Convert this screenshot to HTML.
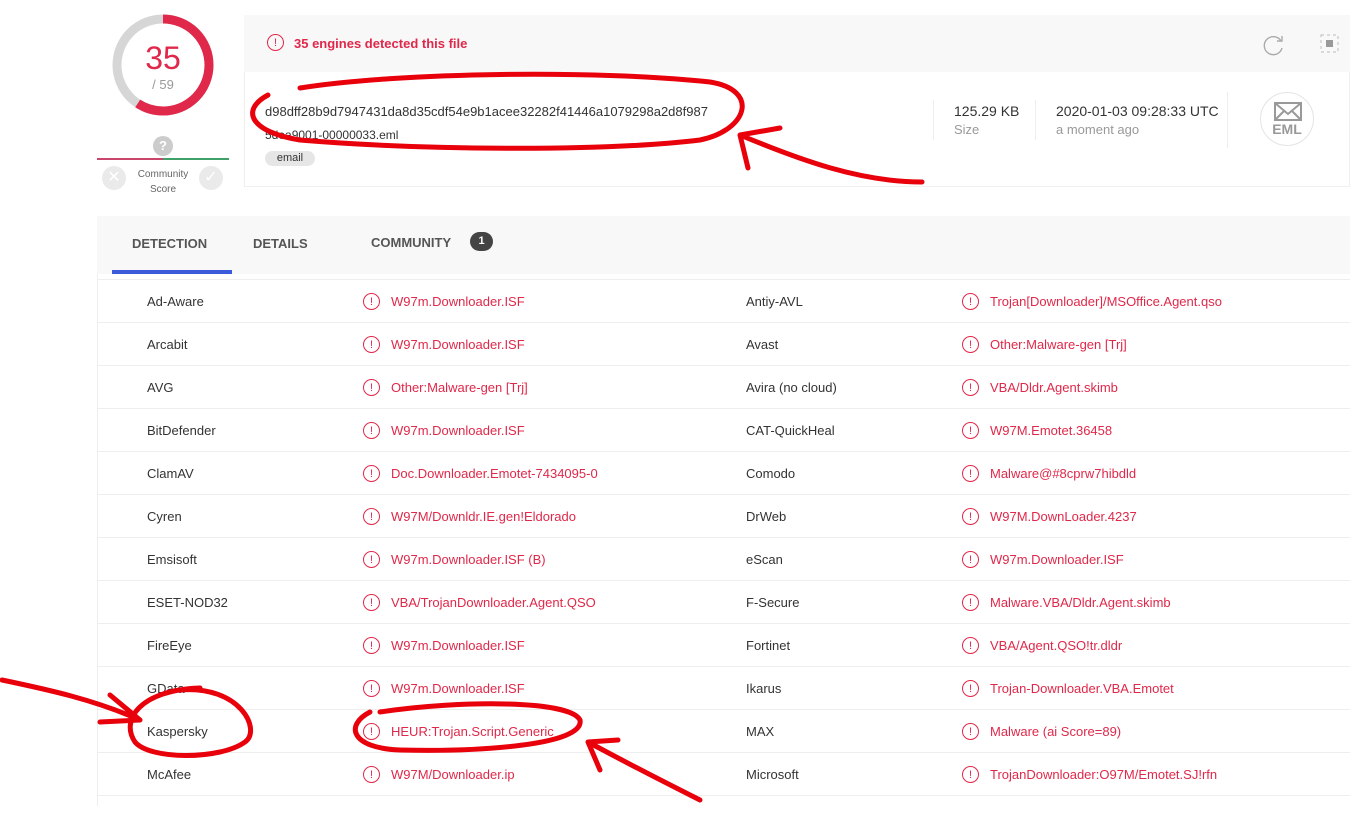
<!DOCTYPE html>
<html><head><meta charset="utf-8"><style>
body{margin:0;width:1350px;height:806px;background:#fff;font-family:"Liberation Sans",sans-serif;position:relative;overflow:hidden;color:#333}
.a{position:absolute}
.row{position:absolute;left:97px;width:1253px;height:43px;border-top:1px solid #eee;font-size:13px}
.row span{position:absolute;top:14px}
.red{color:#e0284a}
.ic{position:absolute;top:13px;width:17px;height:17px;border:1.3px solid #e0284a;border-radius:50%;box-sizing:border-box;color:#e0284a;font-size:11px;display:flex;align-items:center;justify-content:center;font-weight:normal}
</style></head><body>
<svg class="a" style="left:108px;top:10px" width="110" height="110">
<circle cx="55" cy="55" r="46" fill="none" stroke="#d6d6d6" stroke-width="9"/>
<circle cx="55" cy="55" r="46" fill="none" stroke="#e0284a" stroke-width="9" stroke-dasharray="171 289" transform="rotate(-90 55 55)"/>
<circle cx="55" cy="55" r="40" fill="#fff"/>
</svg>
<div class="a red" style="left:123px;top:40px;width:80px;text-align:center;font-size:32px">35</div>
<div class="a" style="left:123px;top:77px;width:80px;text-align:center;font-size:13px;color:#999">/ 59</div>
<div class="a" style="left:97px;top:158px;width:66px;height:2px;background:#c9456c"></div>
<div class="a" style="left:163px;top:158px;width:66px;height:2px;background:#3fa06a"></div>
<div class="a" style="left:153px;top:136px;width:20px;height:20px;border-radius:50%;background:#ccc;color:#fff;font-size:13px;text-align:center;line-height:20px;font-weight:bold">?</div>
<div class="a" style="left:102px;top:166px;width:24px;height:24px;border-radius:50%;background:#eaeaea;color:#fff;text-align:center;line-height:24px">✕</div>
<div class="a" style="left:199px;top:166px;width:24px;height:24px;border-radius:50%;background:#eaeaea;color:#fff;text-align:center;line-height:24px">✓</div>
<div class="a" style="left:128px;top:167px;width:70px;text-align:center;font-size:10px;color:#666;line-height:15px">Community<br>Score</div>
<div class="a" style="left:244px;top:15px;width:1106px;height:172px;border:1px solid #f0f0f0;box-sizing:border-box"></div>
<div class="a" style="left:244px;top:15px;width:1106px;height:57px;background:#f8f8f8"></div>
<div class="ic" style="left:267px;top:34px">!</div>
<div class="a red" style="left:294px;top:36px;font-size:13px;font-weight:bold">35 engines detected this file</div>
<svg class="a" style="left:1262px;top:33px" width="24" height="24"><path d="M19 8 A9 9 0 1 0 20 15" fill="none" stroke="#aaa" stroke-width="1.4"/><path d="M15 8 L20 8 L20 3" fill="none" stroke="#aaa" stroke-width="1.4"/></svg>
<svg class="a" style="left:1320px;top:34px" width="20" height="20"><rect x="1" y="1" width="17" height="17" fill="none" stroke="#bbb" stroke-dasharray="3 3"/><rect x="6" y="6" width="7" height="7" fill="#999"/></svg>
<div class="a" style="left:265px;top:104px;font-size:13px;color:#333">d98dff28b9d7947431da8d35cdf54e9b1acee32282f41446a1079298a2d8f987</div>
<div class="a" style="left:265px;top:128px;font-size:12px;color:#333">5dea9001-00000033.eml</div>
<div class="a" style="left:265px;top:151px;width:50px;height:15px;border-radius:8px;background:#e6e6e6;font-size:11px;text-align:center;line-height:15px">email</div>
<div class="a" style="left:933px;top:100px;width:1px;height:40px;background:#eee"></div>
<div class="a" style="left:1035px;top:100px;width:1px;height:40px;background:#eee"></div>
<div class="a" style="left:1227px;top:92px;width:1px;height:56px;background:#eee"></div>
<div class="a" style="left:954px;top:103px;font-size:14px">125.29 KB</div>
<div class="a" style="left:954px;top:122px;font-size:13px;color:#999">Size</div>
<div class="a" style="left:1056px;top:103px;font-size:14px">2020-01-03 09:28:33 UTC</div>
<div class="a" style="left:1056px;top:122px;font-size:13px;color:#999">a moment ago</div>
<div class="a" style="left:1260px;top:92px;width:54px;height:54px;border:1px solid #e4e4e4;border-radius:50%;box-sizing:border-box"></div>
<svg class="a" style="left:1274px;top:102px" width="28" height="20"><rect x="1" y="1" width="26" height="17" fill="none" stroke="#999" stroke-width="2"/><path d="M1 1 L14 12 L27 1 M1 18 L10 9 M27 18 L18 9" fill="none" stroke="#999" stroke-width="2"/></svg>
<div class="a" style="left:1260px;top:121px;width:54px;text-align:center;font-size:14px;font-weight:bold;color:#999">EML</div>
<div class="a" style="left:97px;top:216px;width:1253px;height:58px;background:#f8f8f8"></div>
<div class="a" style="left:132px;top:236px;font-size:13px;font-weight:bold;color:#555">DETECTION</div>
<div class="a" style="left:253px;top:236px;font-size:13px;font-weight:bold;color:#555">DETAILS</div>
<div class="a" style="left:371px;top:235px;font-size:13px;font-weight:bold;color:#555">COMMUNITY</div>
<div class="a" style="left:470px;top:232px;width:23px;height:19px;border-radius:10px;background:#444;color:#fff;font-size:11px;font-weight:bold;text-align:center;line-height:19px">1</div>
<div class="a" style="left:112px;top:270px;width:120px;height:4px;background:#3b5bdb"></div>
<div class="a" style="left:97px;top:274px;width:1px;height:532px;background:#eee"></div>
<div id="rows"></div>
<script>
var d=[["Ad-Aware","W97m.Downloader.ISF","Antiy-AVL","Trojan[Downloader]/MSOffice.Agent.qso"],
["Arcabit","W97m.Downloader.ISF","Avast","Other:Malware-gen [Trj]"],
["AVG","Other:Malware-gen [Trj]","Avira (no cloud)","VBA/Dldr.Agent.skimb"],
["BitDefender","W97m.Downloader.ISF","CAT-QuickHeal","W97M.Emotet.36458"],
["ClamAV","Doc.Downloader.Emotet-7434095-0","Comodo","Malware@#8cprw7hibdld"],
["Cyren","W97M/Downldr.IE.gen!Eldorado","DrWeb","W97M.DownLoader.4237"],
["Emsisoft","W97m.Downloader.ISF (B)","eScan","W97m.Downloader.ISF"],
["ESET-NOD32","VBA/TrojanDownloader.Agent.QSO","F-Secure","Malware.VBA/Dldr.Agent.skimb"],
["FireEye","W97m.Downloader.ISF","Fortinet","VBA/Agent.QSO!tr.dldr"],
["GData","W97m.Downloader.ISF","Ikarus","Trojan-Downloader.VBA.Emotet"],
["Kaspersky","HEUR:Trojan.Script.Generic","MAX","Malware (ai Score=89)"],
["McAfee","W97M/Downloader.ip","Microsoft","TrojanDownloader:O97M/Emotet.SJ!rfn"]];
var h="";d.forEach(function(r,i){h+='<div class="row" style="top:'+(279+i*43)+'px"><span style="left:50px">'+r[0]+'</span><div class="ic" style="left:266px">!</div><span class="red" style="left:294px">'+r[1]+'</span><span style="left:649px">'+r[2]+'</span><div class="ic" style="left:865px">!</div><span class="red" style="left:893px">'+r[3]+'</span></div>';});
h+='<div class="row" style="top:795px"></div>';
document.getElementById("rows").innerHTML=h;
</script>
<svg class="a" style="left:0;top:0" width="1350" height="806">
<g fill="none" stroke="#e8000b" stroke-width="5" stroke-linecap="round" stroke-linejoin="round">
<path d="M300 88 C400 72 600 70 710 82 C760 90 748 130 700 140 C600 152 420 150 300 140 C250 132 240 110 268 95"/>
<path d="M740 135 L780 128 M740 135 L748 168 M740 135 C800 160 860 182 922 182"/>
<path d="M2 680 C50 690 95 700 140 720 M140 720 L110 695 M140 720 L100 722"/>
<path d="M180 690 C240 685 262 730 245 742 C220 760 150 760 135 742 C120 720 140 690 200 688"/>
<path d="M380 712 C460 700 570 700 580 720 C585 745 480 752 400 750 C350 748 345 725 370 712"/>
<path d="M588 742 L618 740 M588 742 L600 770 M588 742 C640 770 680 790 700 800"/>
</g></svg>
</body></html>
